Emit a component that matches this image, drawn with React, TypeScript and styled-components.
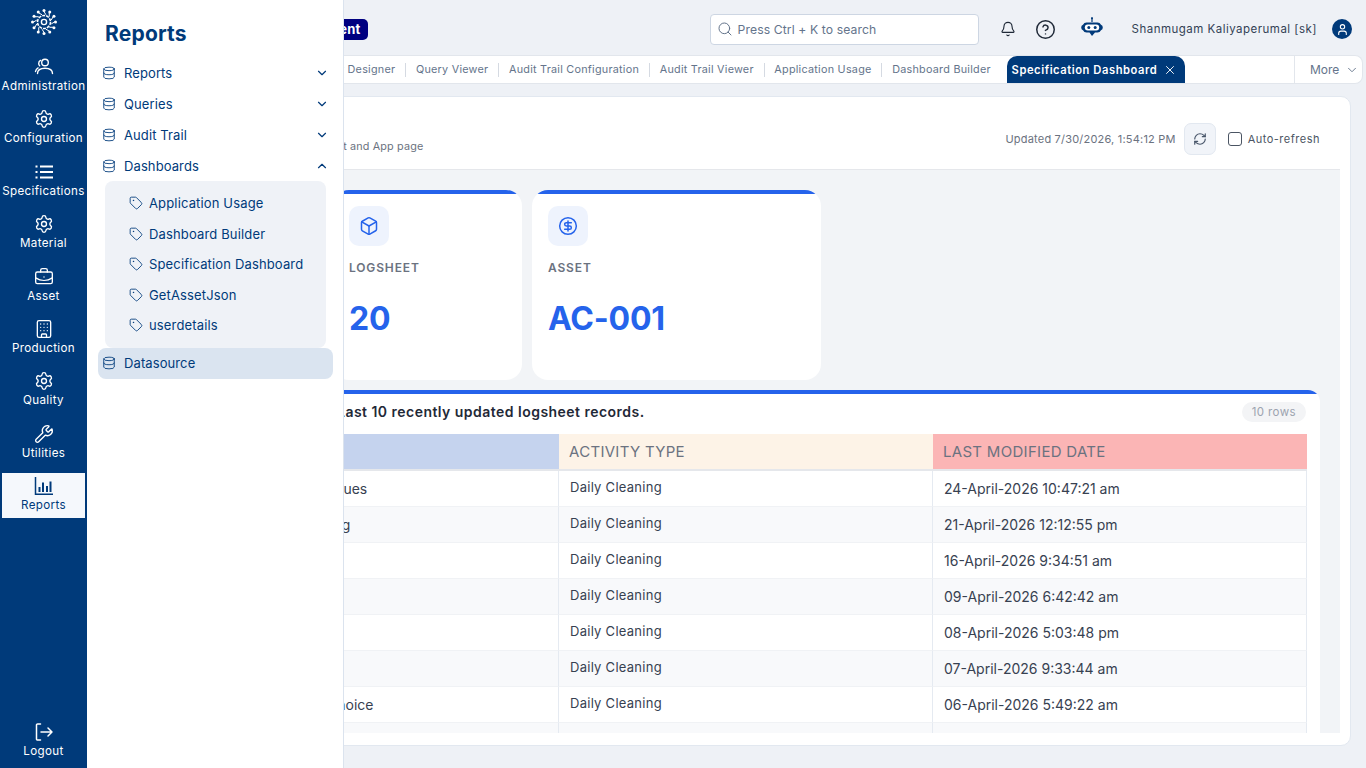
import React from "react";
import styled, { createGlobalStyle } from "styled-components";
import {
  Settings, BriefcaseBusiness, Building, Wrench, Database, ChevronDown, ChevronUp, Tag,
  Search, Bell, CircleHelp, X, RefreshCw, Box, CircleDollarSign, User,
} from "lucide-react";

const NAVY = "#003a7a";
const BLUE = "#2563eb";

const Global = createGlobalStyle`
  html, body { margin: 0; padding: 0; height: 100%; overflow: hidden; background: #eef1f6; }
  * { box-sizing: border-box; }
  body { font-family: "Inter", "Liberation Sans", sans-serif; }
`;

const Page = styled.div`
  position: relative;
  display: flex;
  width: 1366px;
  height: 768px;
  overflow: hidden;
`;

const Rail = styled.nav`
  flex: 0 0 87px;
  width: 87px;
  min-width: 0;
  display: flex;
  flex-direction: column;
  background: ${NAVY};
  padding: 8px 2px 4px;
`;
const RailLogo = styled.div`
  height: 46px;
  display: flex;
  justify-content: center;
  svg { display: block; }
`;
const RailList = styled.div`
  display: flex;
  flex-direction: column;
  gap: 7.4px;
`;
const RailItem = styled.div<{ $active?: boolean }>`
  height: 45px;
  display: flex;
  flex-direction: column;
  align-items: center;
  padding-top: 3px;
  background: ${(p) => (p.$active ? "#f5f8fc" : "transparent")};
  color: ${(p) => (p.$active ? NAVY : "#fff")};
  svg { display: block; }
`;
const RailLabel = styled.span`
  margin-top: 2px;
  font-size: 11.6px;
  line-height: 14px;
  letter-spacing: 0.35px;
  white-space: nowrap;
`;
const RailBottom = styled.div`
  margin-top: auto;
`;

const Main = styled.div`
  flex: 1;
  min-width: 0;
  display: flex;
  flex-direction: column;
`;
const Header = styled.header`
  height: 55px;
  flex: none;
  display: flex;
  align-items: center;
  padding: 3px 14px 0 0;
`;
const EnvBadge = styled.span`
  margin-left: 179px;
  height: 21px;
  padding: 0 7px;
  display: flex;
  align-items: center;
  background: #000080;
  color: #fff;
  font-size: 13px;
  font-weight: 700;
  border-radius: 5px;
  letter-spacing: 0.3px;
`;
const SearchBox = styled.div`
  margin-left: auto;
  width: 269px;
  height: 31px;
  display: flex;
  align-items: center;
  gap: 5px;
  padding: 0 6px;
  background: #fff;
  border: 1px solid #cdd6e3;
  border-radius: 4px;
  color: #64748b;
  font-size: 12.2px;
  letter-spacing: 0.1px;
`;
const HeadIcon = styled.span<{ $ml: number }>`
  margin-left: ${(p) => p.$ml}px;
  display: flex;
  color: #1f2937;
`;
const UserName = styled.span`
  margin-left: 28px;
  font-size: 11.5px;
  letter-spacing: 0.48px;
  color: #334155;
  white-space: nowrap;
`;
const Avatar = styled.span`
  margin-left: 15px;
  width: 20px;
  height: 20px;
  border-radius: 50%;
  background: ${NAVY};
  color: #fff;
  display: flex;
  align-items: center;
  justify-content: center;
`;

const TabBar = styled.div`
  height: 29px;
  flex: none;
  margin: 0 3px 0 0;
  display: flex;
  background: #fff;
  border: 1px solid #e2e6ec;
  border-left: 0;
  border-radius: 0 8px 8px 0;
`;
const TabList = styled.div`
  flex: 1;
  display: flex;
  align-items: center;
  padding-left: 215px;
  overflow: hidden;
`;
const Tab = styled.span<{ $divider?: boolean }>`
  display: flex;
  align-items: center;
  height: 14px;
  padding: 0 9.8px;
  font-size: 10.8px;
  letter-spacing: 0.25px;
  color: #64748b;
  white-space: nowrap;
  border-right: ${(p) => (p.$divider ? "1px solid #d5dae2" : "0")};
`;
const ActiveTab = styled.span`
  margin-left: 6px;
  width: 178px;
  height: 28px;
  padding: 0 8px 0 5px;
  display: flex;
  align-items: center;
  justify-content: space-between;
  background: ${NAVY};
  color: #fff;
  border-radius: 10px 10px 0 0;
  font-size: 11.2px;
  font-weight: 600;
  letter-spacing: 0.55px;
  white-space: nowrap;
`;
const More = styled.div`
  flex: 0 0 68px;
  display: flex;
  align-items: center;
  gap: 6px;
  padding-left: 15px;
  border-left: 1px solid #e2e6ec;
  color: #64748b;
  font-size: 12px;
`;

const Panel = styled.section`
  flex: 1;
  min-height: 0;
  margin: 12px 15px 22px 10px;
  display: flex;
  flex-direction: column;
  background: #fff;
  border: 1px solid #e2e8f0;
  border-radius: 10px;
  padding: 0 10px 12px 0;
`;
const PanelHead = styled.div`
  flex: 0 0 73px;
  display: flex;
  align-items: center;
  justify-content: space-between;
  padding: 0 20px 0 15px;
  border-bottom: 1px solid #e5e7eb;
`;
const Titles = styled.div`
  display: flex;
  flex-direction: column;
  gap: 6px;
`;
const PageTitle = styled.h1`
  margin: 0;
  font-size: 18px;
  line-height: 22px;
  color: #1f2937;
`;
const Subtitle = styled.p`
  margin: 0;
  font-size: 10.8px;
  letter-spacing: 0.15px;
  line-height: 14px;
  color: #6b7280;
`;
const HeadTools = styled.div`
  display: flex;
  align-items: center;
  font-size: 11px;
  letter-spacing: 0.2px;
  color: #6b7280;
  padding-top: 11px;
`;
const RefreshBtn = styled.span`
  margin-left: 8px;
  width: 32px;
  height: 32px;
  display: flex;
  align-items: center;
  justify-content: center;
  background: #f1f4f9;
  border: 1px solid #e2e8f0;
  border-radius: 7px;
  color: #475569;
`;
const Check = styled.span`
  margin-left: 12px;
  width: 14px;
  height: 14px;
  background: #fff;
  border: 1px solid #4b5563;
  border-radius: 3px;
`;
const CheckLabel = styled.span`
  margin-left: 6px;
  letter-spacing: 0.5px;
  color: #4b5563;
`;

const Body = styled.div`
  flex: 1;
  min-height: 0;
  overflow: hidden;
  background: #f2f4f7;
  padding: 20px 20px 0 15px;
`;
const Cards = styled.div`
  display: grid;
  grid-template-columns: 210px 189px 289px;
  gap: 10px;
`;
const Card = styled.div`
  height: 190px;
  padding: 16px 16px 0;
  background: linear-gradient(${BLUE} 4px, #fff 4px);
  border-radius: 16px;
`;
const CardIcon = styled.div`
  width: 40px;
  height: 40px;
  display: flex;
  align-items: center;
  justify-content: center;
  background: #eef3fd;
  border-radius: 10px;
  color: ${BLUE};
`;
const CardLabel = styled.div`
  margin-top: 14px;
  font-size: 12px;
  line-height: 16px;
  font-weight: 600;
  letter-spacing: 0.85px;
  color: #6b7280;
`;
const CardValue = styled.div`
  margin-top: 21px;
  font-size: 32px;
  line-height: 44px;
  font-weight: 700;
  letter-spacing: -0.2px;
  color: ${BLUE};
`;
const TableCard = styled.div`
  margin-top: 10px;
  padding: 11px 13px 0 13px;
  background: linear-gradient(${BLUE} 4px, #fff 4px);
  border-radius: 12px 12px 0 0;
`;
const TableHead = styled.div`
  height: 20px;
  display: flex;
  align-items: center;
  justify-content: space-between;
  margin-right: 1px;
`;
const TableTitle = styled.h2`
  margin: 0 0 0 211px;
  font-size: 14px;
  font-weight: 600;
  letter-spacing: 0.47px;
  color: #1f2937;
`;
const RowCount = styled.span`
  height: 20px;
  margin-top: 2px;
  padding: 0 10px;
  display: flex;
  align-items: center;
  background: #f3f4f6;
  border-radius: 10px;
  font-size: 11.5px;
  letter-spacing: 0.4px;
  color: #9ca3af;
`;
const Table = styled.table`
  margin-top: 13px;
  width: 1181px;
  table-layout: fixed;
  border-collapse: separate;
  border-spacing: 0;
`;
const Th = styled.th<{ $bg: string; $w: number }>`
  width: ${(p) => p.$w}px;
  height: 37px;
  padding: 0 10px;
  background: ${(p) => p.$bg};
  border-bottom: 2px solid #e5e7eb;
  text-align: left;
  font-size: 15px;
  font-weight: 400;
  letter-spacing: 0.3px;
  color: #6b7280;
`;
const Tr = styled.tr<{ $odd: boolean }>`
  background: ${(p) => (p.$odd ? "#f8f9fb" : "#fff")};
`;
const Td = styled.td<{ $small?: boolean }>`
  height: 36px;
  padding: ${(p) => (p.$small ? "0 10px 3px 11px" : "0 10px 0 11px")};
  border-bottom: 1px solid #f0f2f5;
  border-right: 1px solid #e5eaf1;
  font-size: ${(p) => (p.$small ? "13px" : "14px")};
  letter-spacing: ${(p) => (p.$small ? "0.27px" : "0")};
  color: #374151;
  white-space: nowrap;
`;

const Flyout = styled.aside`
  position: absolute;
  left: 87px;
  top: 0;
  bottom: 0;
  width: 257px;
  background: #fff;
  border-right: 1px solid #dbe3ee;
  padding: 20px 10px 0 11px;
  color: ${NAVY};
`;
const FlyTitle = styled.h2`
  margin: 0 0 9px 7px;
  font-size: 21px;
  line-height: 28px;
  font-weight: 700;
  letter-spacing: 0.2px;
`;
const FlyRow = styled.div<{ $active?: boolean }>`
  height: 31px;
  padding: 0 4px 0 4px;
  display: flex;
  align-items: center;
  gap: 8px;
  border-radius: 8px;
  background: ${(p) => (p.$active ? "#dae4f0" : "transparent")};
  font-size: 13px;
  letter-spacing: 0.1px;
`;
const FlyLabel = styled.span`
  flex: 1;
`;
const FlyGroup = styled.div`
  margin: 0 7px;
  padding: 7px 0 7px 24px;
  background: #eff2f7;
  border-radius: 8px;
`;
const FlySub = styled.div`
  height: 30.5px;
  display: flex;
  align-items: center;
  gap: 6px;
  font-size: 13px;
  letter-spacing: 0.15px;
`;

const Logo = () => {
  const ring = Array.from({ length: 12 }, (_, i) => (i * Math.PI) / 6);
  return (
    <svg width="28" height="28" viewBox="0 0 28 28" fill="#fff">
      {ring.map((a, i) => (
        <circle key={i} cx={14 + 11.5 * Math.cos(a)} cy={14 + 11.5 * Math.sin(a)} r={1.5} />
      ))}
      {ring.map((a, i) => (
        <line
          key={`l${i}`}
          x1={14 + 7.5 * Math.cos(a + 0.26)}
          y1={14 + 7.5 * Math.sin(a + 0.26)}
          x2={14 + 10.5 * Math.cos(a)}
          y2={14 + 10.5 * Math.sin(a)}
          stroke="#fff"
          strokeWidth="1"
        />
      ))}
      <circle cx="14" cy="14" r="6.5" fill="none" stroke="#fff" strokeWidth="1.6" strokeDasharray="3 1" />
      <circle cx="14" cy="14" r="2.6" fill="none" stroke="#fff" strokeWidth="1.4" />
    </svg>
  );
};

const AdminIcon = () => (
  <svg width="20" height="20" viewBox="0 0 20 20" fill="none" stroke="currentColor" strokeWidth="1.4" strokeLinecap="round">
    <circle cx="11" cy="5.5" r="3.3" />
    <path d="M3.5 16.5c0-3.6 3-5.3 7.5-5.3s7.5 1.7 7.5 5.3" />
    <path d="M6.5 3.4a3.4 3.4 0 0 0-1.8 3c0 1 .4 1.8 1 2.4" />
    <path d="M1.5 14.5c.3-1.7 1.2-2.9 2.6-3.6" />
  </svg>
);
const ListIcon = () => (
  <svg width="20" height="20" viewBox="0 0 20 20" fill="none" stroke="currentColor" strokeWidth="2">
    <path d="M6 4.5h13M6 10h13M6 15.5h13" />
    <path d="M1.5 4.5h2M1.5 10h2M1.5 15.5h2" />
  </svg>
);
const ReportsIcon = () => (
  <svg width="20" height="20" viewBox="0 0 20 20" fill="none" stroke="currentColor" strokeWidth="1.5">
    <path d="M1.5 1v17.3H19" />
    <path d="M5.5 11v5M9 6.5V16M13 10v6M16.5 5.5V16" strokeWidth="2" />
  </svg>
);
const LogoutIcon = () => (
  <svg width="20" height="20" viewBox="0 0 20 20" fill="none" stroke="currentColor" strokeWidth="1.5" strokeLinecap="round" strokeLinejoin="round">
    <path d="M6.5 2H3.6A1.1 1.1 0 0 0 2.5 3.1v13.8A1.1 1.1 0 0 0 3.6 18h2.9" />
    <path d="M7 10h11M14 6l4 4-4 4" />
  </svg>
);
const BotIcon = () => (
  <svg width="24" height="24" viewBox="0 0 24 24">
    <path d="M12 0.5v4.5" stroke="#003a7a" strokeWidth="1.2" />
    <circle cx="12" cy="1.2" r="1" fill="#003a7a" />
    <path d="M6.5 5.5h11a4 4 0 0 1 3.5 2.2 3 3 0 0 1 1.8 2.8 3 3 0 0 1-1.8 2.8 4 4 0 0 1-3.5 2.2h-2.5L12 19l-2.5-3.5h-3A4 4 0 0 1 3 13.3a3 3 0 0 1-1.8-2.8A3 3 0 0 1 3 7.7a4 4 0 0 1 3.5-2.2z" fill="#003a7a" />
    <rect x="4.8" y="7.6" width="14.4" height="5.8" rx="2.9" fill="#fff" />
    <circle cx="8.8" cy="10.5" r="1.5" fill="#003a7a" />
    <circle cx="15.2" cy="10.5" r="1.5" fill="#003a7a" />
  </svg>
);

const railItems: { label: string; icon: React.ReactNode; active?: boolean }[] = [
  { label: "Administration", icon: <AdminIcon /> },
  { label: "Configuration", icon: <Settings size={20} strokeWidth={1.6} /> },
  { label: "Specifications", icon: <ListIcon /> },
  { label: "Material", icon: <Settings size={20} strokeWidth={1.6} /> },
  { label: "Asset", icon: <BriefcaseBusiness size={20} strokeWidth={1.6} /> },
  { label: "Production", icon: <Building size={20} strokeWidth={1.6} /> },
  { label: "Quality", icon: <Settings size={20} strokeWidth={1.6} /> },
  { label: "Utilities", icon: <Wrench size={20} strokeWidth={1.6} /> },
  { label: "Reports", icon: <ReportsIcon />, active: true },
];

const tabs = ["Query Designer", "Query Viewer", "Audit Trail Configuration", "Audit Trail Viewer", "Application Usage"];

const rows = [
  ["Logsheet Selected Values", "24-April-2026 10:47:21 am"],
  ["Equipment Line Testing", "21-April-2026 12:12:55 pm"],
  ["Line Clearance", "16-April-2026 9:34:51 am"],
  ["Room Cleaning", "09-April-2026 6:42:42 am"],
  ["Area Cleaning", "08-April-2026 5:03:48 pm"],
  ["Filter Cleaning", "07-April-2026 9:33:44 am"],
  ["Equipment Multiple Choice", "06-April-2026 5:49:22 am"],
  ["Balance Cleaning", "03-April-2026 4:12:10 pm"],
];

const groups = ["Reports", "Queries", "Audit Trail"];
const dashboards = ["Application Usage", "Dashboard Builder", "Specification Dashboard", "GetAssetJson", "userdetails"];

export default function App() {
  return (
    <Page>
      <Global />
      <Rail>
        <RailLogo><Logo /></RailLogo>
        <RailList>
          {railItems.map((r) => (
            <RailItem key={r.label} $active={r.active}>
              {r.icon}
              <RailLabel>{r.label}</RailLabel>
            </RailItem>
          ))}
        </RailList>
        <RailBottom>
          <RailItem>
            <LogoutIcon />
            <RailLabel>Logout</RailLabel>
          </RailItem>
        </RailBottom>
      </Rail>

      <Main>
        <Header>
          <EnvBadge>Development</EnvBadge>
          <SearchBox>
            <Search size={16} strokeWidth={1.5} color="#64748b" />
            Press Ctrl + K to search
          </SearchBox>
          <HeadIcon $ml={21}><Bell size={16} strokeWidth={1.7} /></HeadIcon>
          <HeadIcon $ml={19}><CircleHelp size={21} strokeWidth={1.7} /></HeadIcon>
          <HeadIcon $ml={24}><BotIcon /></HeadIcon>
          <UserName>Shanmugam Kaliyaperumal [sk]</UserName>
          <Avatar><User size={13} strokeWidth={2} /></Avatar>
        </Header>
        <TabBar>
          <TabList>
            {tabs.map((t) => <Tab key={t} $divider>{t}</Tab>)}
            <Tab>Dashboard Builder</Tab>
            <ActiveTab>
              Specification Dashboard
              <X size={14} strokeWidth={1.6} />
            </ActiveTab>
          </TabList>
          <More>
            More
            <ChevronDown size={14} strokeWidth={1.6} />
          </More>
        </TabBar>

        <Panel>
          <PanelHead>
            <Titles>
              <PageTitle>Specification Dashboard</PageTitle>
              <Subtitle>Real-time overview of all the Logsheet Asset and App page</Subtitle>
            </Titles>
            <HeadTools>
              Updated 7/30/2026, 1:54:12 PM
              <RefreshBtn><RefreshCw size={14} strokeWidth={2} /></RefreshBtn>
              <Check />
              <CheckLabel>Auto-refresh</CheckLabel>
            </HeadTools>
          </PanelHead>
          <Body>
            <Cards>
              <Card />
              <Card>
                <CardIcon><Box size={20} strokeWidth={1.8} /></CardIcon>
                <CardLabel>LOGSHEET</CardLabel>
                <CardValue>20</CardValue>
              </Card>
              <Card>
                <CardIcon><CircleDollarSign size={20} strokeWidth={1.8} /></CardIcon>
                <CardLabel>ASSET</CardLabel>
                <CardValue>AC-001</CardValue>
              </Card>
            </Cards>
            <TableCard>
              <TableHead>
                <TableTitle>Last 10 recently updated logsheet records.</TableTitle>
                <RowCount>10 rows</RowCount>
              </TableHead>
              <Table>
                <thead>
                  <tr>
                    <Th $bg="#c5d3ee" $w={59}>#</Th>
                    <Th $bg="#c5d3ee" $w={374}>LOGSHEET NAME</Th>
                    <Th $bg="#fdf3e7" $w={374}>ACTIVITY TYPE</Th>
                    <Th $bg="#fbb5b5" $w={374}>LAST MODIFIED DATE</Th>
                  </tr>
                </thead>
                <tbody>
                  {rows.map(([name, date], i) => (
                    <Tr key={date} $odd={i % 2 === 1}>
                      <Td>{i + 1}</Td>
                      <Td>{name}</Td>
                      <Td $small>Daily Cleaning</Td>
                      <Td>{date}</Td>
                    </Tr>
                  ))}
                </tbody>
              </Table>
            </TableCard>
          </Body>
        </Panel>
      </Main>

      <Flyout>
        <FlyTitle>Reports</FlyTitle>
        {groups.map((g) => (
          <FlyRow key={g}>
            <Database size={14} strokeWidth={1.5} />
            <FlyLabel>{g}</FlyLabel>
            <ChevronDown size={14} strokeWidth={2} />
          </FlyRow>
        ))}
        <FlyRow>
          <Database size={14} strokeWidth={1.5} />
          <FlyLabel>Dashboards</FlyLabel>
          <ChevronUp size={14} strokeWidth={2} />
        </FlyRow>
        <FlyGroup>
          {dashboards.map((d) => (
            <FlySub key={d}>
              <Tag size={14} strokeWidth={1.5} />
              {d}
            </FlySub>
          ))}
        </FlyGroup>
        <FlyRow $active>
          <Database size={14} strokeWidth={1.5} />
          <FlyLabel>Datasource</FlyLabel>
        </FlyRow>
      </Flyout>
    </Page>
  );
}
